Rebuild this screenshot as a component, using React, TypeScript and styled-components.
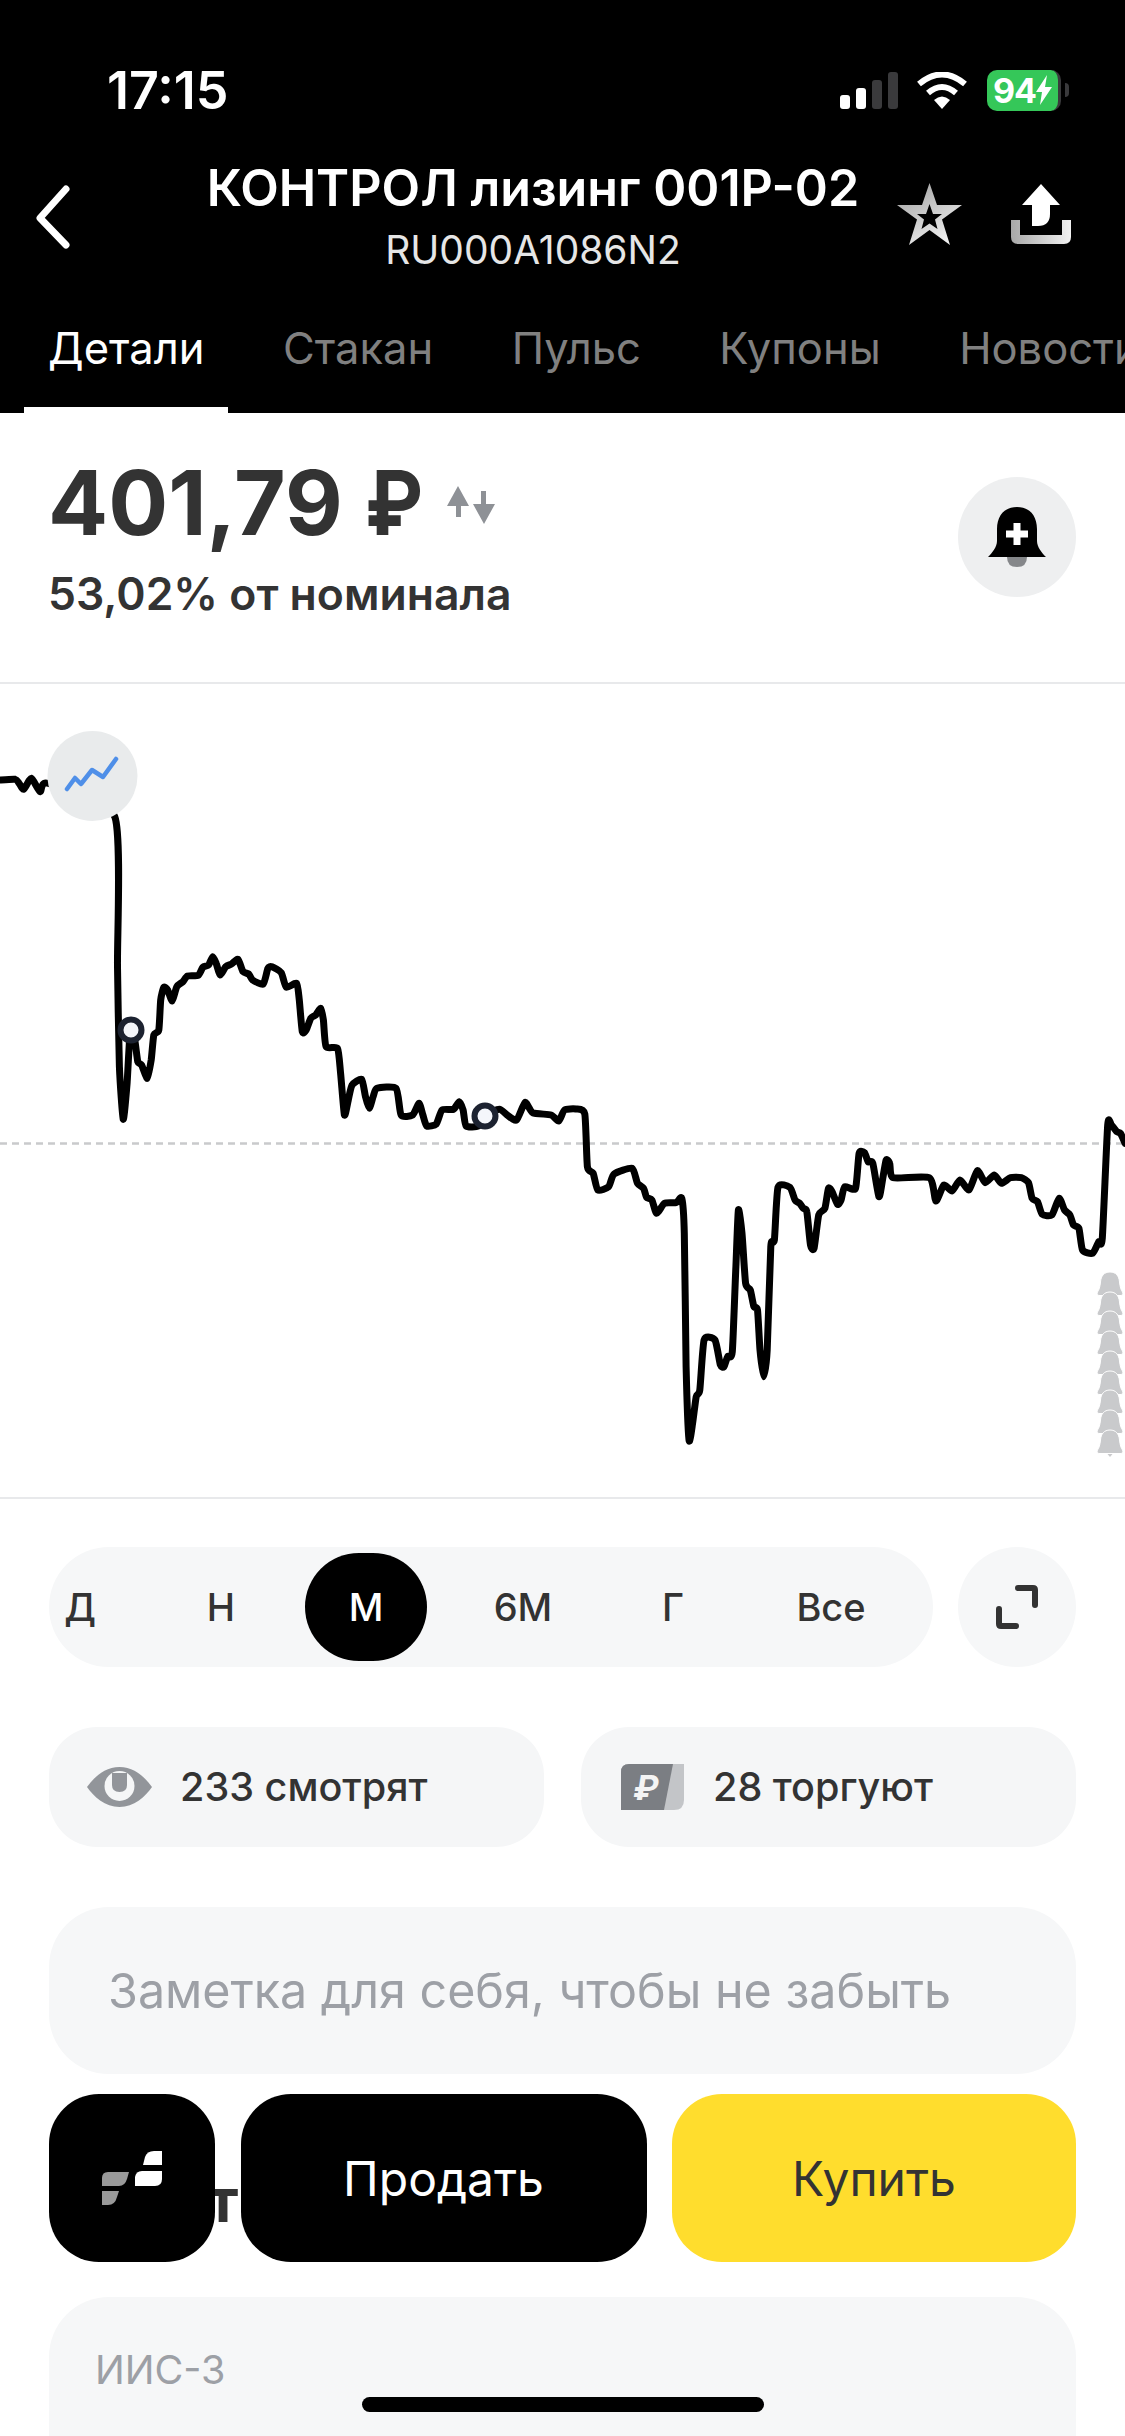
import styled, { createGlobalStyle } from "styled-components";

const GlobalStyle = createGlobalStyle`
  html, body {
    margin: 0;
    padding: 0;
    background: #fff;
    font-family: Inter, "Liberation Sans", sans-serif;
  }
  * {
    box-sizing: border-box;
  }
`;

const Screen = styled.div`
  position: relative;
  width: 1125px;
  height: 2436px;
  overflow: hidden;
  background: #fff;
`;

const Header = styled.header`
  background: #000;
  color: #fff;
  height: 413px;
  display: flex;
  flex-direction: column;
`;

const StatusBar = styled.div`
  height: 130px;
  padding: 50px 0 0 107px;
  display: flex;
  align-items: center;
`;

const Time = styled.span`
  width: 733px;
  font-size: 52px;
  font-weight: 600;
`;

const Battery = styled.div`
  margin-left: 20px;
  width: 74px;
  height: 41px;
  border-radius: 10px;
  background: #35c759;
  border-right: 3px solid #3a3a3c;
  display: flex;
  align-items: center;
  justify-content: center;
  font-size: 34px;
  font-weight: 700;
  letter-spacing: -1px;
`;

const BatteryCap = styled.div`
  width: 4px;
  height: 14px;
  margin-left: 4px;
  border-radius: 0 4px 4px 0;
  background: #3a3a3c;
`;

const NavBar = styled.div`
  height: 170px;
  display: flex;
  align-items: center;
`;

const BackButton = styled.div`
  width: 200px;
  padding: 4px 0 0 30px;
  display: flex;
`;

const TitleBlock = styled.div`
  width: 666px;
  text-align: center;
  white-space: nowrap;
`;

const Title = styled.div`
  font-size: 50.200px;
  font-weight: 600;
  line-height: 60px;
  margin-bottom: 9px;
`;

const Isin = styled.div`
  font-size: 39px;
  line-height: 46px;
  color: #e6e6e6;
`;

const NavActions = styled.div`
  margin-left: 31px;
  margin-top: -2px;
  display: flex;
  align-items: center;
  gap: 49px;
`;

const Tabs = styled.nav`
  height: 113px;
  display: flex;
  padding-left: 24px;
  white-space: nowrap;
  overflow: hidden;
`;

const Tab = styled.div<{ $active?: boolean }>`
  height: 113px;
  padding: 20px 24px 0;
  margin-right: 30.500px;
  font-size: 43.500px;
  line-height: 56px;
  color: ${(p) => (p.$active ? "#fff" : "#808080")};
  border-bottom: 6px solid ${(p) => (p.$active ? "#fff" : "transparent")};
`;

const PriceSection = styled.section`
  height: 271px;
  padding: 44px 49px 0 48px;
  display: flex;
  justify-content: space-between;
  border-bottom: 2px solid #e8e9eb;
`;

const PriceRow = styled.div`
  display: flex;
  align-items: center;
  gap: 15px;
  height: 90px;
  font-size: 89px;
  font-weight: 700;
  color: #333;
`;

const PriceCurrency = styled.span`
  display: inline-block;
  margin-left: 7px;
  transform: scaleX(0.88);
  transform-origin: left center;
`;

const PriceNote = styled.div`
  margin-top: 20px;
  font-size: 44.500px;
  line-height: 54px;
  font-weight: 600;
  color: #333;
`;

const RoundButton = styled.div<{ $bg: string }>`
  width: 118px;
  height: 120px;
  border-radius: 50%;
  background: ${(p) => p.$bg};
  display: flex;
  align-items: center;
  justify-content: center;
  flex-shrink: 0;
`;

const BellButton = styled(RoundButton)`
  margin-top: 20px;
`;

const ChartBox = styled.div`
  height: 815px;
  border-bottom: 2px solid #e8e9eb;
  display: flex;
`;

const Content = styled.div`
  padding: 48px 49px 0;
  display: flex;
  flex-direction: column;
`;

const RangeRow = styled.div`
  display: flex;
  justify-content: space-between;
`;

const RangePill = styled.div`
  width: 884px;
  height: 120px;
  border-radius: 60px;
  background: #f6f7f8;
  display: flex;
  align-items: center;
  overflow: hidden;
`;

const RangeItem = styled.div<{ $active?: boolean; $shift: number }>`
  width: 122px;
  height: 108px;
  margin-left: ${(p) => p.$shift}px;
  flex-shrink: 0;
  border-radius: 54px;
  background: ${(p) => (p.$active ? "#000" : "transparent")};
  color: ${(p) => (p.$active ? "#fff" : "#333")};
  display: flex;
  align-items: center;
  justify-content: center;
  font-size: 38px;
  font-weight: 500;
`;

const StatsRow = styled.div`
  margin-top: 60px;
  display: grid;
  grid-template-columns: 495px 495px;
  justify-content: space-between;
`;

const StatCard = styled.div<{ $gap: number; $left: number }>`
  height: 120px;
  border-radius: 48px;
  background: #f5f6f7;
  padding-left: ${(p) => p.$left}px;
  display: flex;
  align-items: center;
  gap: ${(p) => p.$gap}px;
  font-size: 39.600px;
  font-weight: 500;
  color: #333;
`;

const NoteField = styled.div`
  margin-top: 60px;
  height: 167px;
  border-radius: 60px;
  background: #f6f7f8;
  padding-left: 59px;
  display: flex;
  align-items: center;
  font-size: 48.400px;
  color: #9da0a6;
`;

const SectionHeading = styled.h2`
  margin: 91px 0 0;
  height: 70px;
  font-size: 60px;
  line-height: 70px;
  font-weight: 700;
  letter-spacing: 2.750px;
  color: #333;
`;

const AccountCard = styled.div`
  margin-top: 62px;
  height: 220px;
  border-radius: 60px;
  background: #f6f7f8;
  padding: 50px 46px 0;
  font-size: 39.500px;
  line-height: 46px;
  color: #9da0a6;
`;

const ActionBar = styled.div`
  position: absolute;
  left: 49px;
  top: 2094px;
  width: 1027px;
  height: 168px;
  display: grid;
  grid-template-columns: 166px 406px 404px;
  justify-content: space-between;
`;

const ActionButton = styled.div<{ $yellow?: boolean }>`
  border-radius: 50px;
  background: ${(p) => (p.$yellow ? "#ffdd2d" : "#000")};
  color: ${(p) => (p.$yellow ? "#333" : "#fff")};
  display: flex;
  align-items: center;
  justify-content: center;
  font-size: 48px;
`;

const HomeIndicator = styled.div`
  position: absolute;
  left: 362px;
  top: 2397px;
  width: 402px;
  height: 15px;
  border-radius: 8px;
  background: #000;
`;

// points read off the reference, [x, y] in page pixels
const leftPart = [
  [0, 240], [40, 238], [50, 250], [62, 268], [82, 235], [105, 275], [125, 250], [300, 350],
  [307, 800], [312, 1100], [322, 1258], [332, 1150], [340, 1000], [352, 1020], [360, 1085],
  [370, 1095], [385, 1135], [395, 1080], [402, 1005], [415, 990], [420, 900], [428, 862],
  [438, 870], [450, 903], [462, 860], [478, 845], [490, 828], [518, 826], [530, 802],
  [545, 795], [556, 770], [565, 790], [575, 825], [590, 800], [605, 792], [622, 778],
  [635, 815], [650, 822], [660, 840], [688, 852], [700, 805], [710, 800], [735, 818],
  [748, 862], [775, 850], [782, 900], [790, 995], [800, 990], [812, 955], [825, 945],
  [838, 925], [845, 960], [852, 1040], [882, 1045], [890, 1120], [900, 1245], [910, 1200],
  [920, 1155], [945, 1138], [955, 1190], [965, 1225], [975, 1190], [985, 1165], [1035, 1165],
  [1048, 1245], [1078, 1245], [1095, 1210], [1105, 1245], [1115, 1278], [1140, 1272],
  [1155, 1230], [1185, 1228], [1200, 1205], [1210, 1230], [1218, 1278], [1250, 1278],
  [1268, 1245], [1305, 1228], [1325, 1245], [1350, 1260], [1372, 1207], [1392, 1238],
  [1440, 1245], [1460, 1263], [1475, 1230], [1505, 1227], [1528, 1242], [1535, 1400],
].map(([x, y]) => [x / 2.613, y / 3 + 700]);

const rightPart = [
  [92, 520], [105, 570], [135, 560], [150, 522], [200, 505], [215, 550], [232, 565], [240, 592],
  [255, 600], [268, 640], [290, 610], [322, 608], [338, 595], [345, 700], [350, 1100],
  [358, 1320], [368, 1270], [378, 1190], [388, 1170], [400, 1020], [430, 1020], [445, 1095],
  [455, 1100], [465, 1070], [478, 1055], [488, 800], [495, 630], [505, 700], [515, 850],
  [528, 870], [538, 920], [548, 930], [555, 1050], [565, 1130], [575, 1050], [585, 740],
  [595, 720], [605, 562], [638, 562], [652, 600], [665, 610], [675, 625], [685, 635],
  [695, 735], [705, 745], [718, 645], [735, 625], [745, 565], [755, 575], [770, 613],
  [780, 600], [790, 560], [820, 565], [830, 460], [845, 458], [855, 485], [868, 490],
  [885, 590], [895, 540], [905, 480], [915, 490], [925, 533], [1025, 533], [1043, 603],
  [1065, 555], [1088, 573], [1110, 540], [1135, 570], [1158, 512], [1180, 548], [1205, 525],
  [1225, 550], [1250, 533], [1280, 533], [1300, 548], [1310, 595], [1325, 605], [1338, 643],
  [1365, 645], [1385, 595], [1400, 630], [1415, 645], [1425, 675], [1440, 685], [1450, 750],
  [1478, 760], [1495, 725], [1505, 715], [1520, 375], [1530, 375], [1545, 395], [1555, 400],
  [1568, 430],
].map(([x, y]) => [x / 2.775 + 560, y / 3 + 1000]);

const linePoints = [...leftPart, ...rightPart];

const smoothPath = (pts: number[][]) => {
  let d = `M${pts[0][0].toFixed(1)} ${pts[0][1].toFixed(1)}`;
  for (let i = 0; i < pts.length - 1; i++) {
    const p0 = pts[Math.max(i - 1, 0)];
    const p1 = pts[i];
    const p2 = pts[i + 1];
    const p3 = pts[Math.min(i + 2, pts.length - 1)];
    const c1x = p1[0] + (p2[0] - p0[0]) / 10;
    const c1y = p1[1] + (p2[1] - p0[1]) / 10;
    const c2x = p2[0] - (p3[0] - p1[0]) / 10;
    const c2y = p2[1] - (p3[1] - p1[1]) / 10;
    d += `C${c1x.toFixed(1)} ${c1y.toFixed(1)} ${c2x.toFixed(1)} ${c2y.toFixed(1)} ${p2[0].toFixed(1)} ${p2[1].toFixed(1)}`;
  }
  return d;
};

const bellTops = [1272, 1292, 1311, 1331, 1351, 1371, 1390, 1410, 1430];

function PriceChart() {
  return (
    <svg width="1125" height="813" viewBox="0 684 1125 813">
      <line x1="0" y1="1143.5" x2="1125" y2="1143.5" stroke="#c9cacc" strokeWidth="2.5" strokeDasharray="7 5" />
      <path d={smoothPath(linePoints)} fill="none" stroke="#000" strokeWidth="7" strokeLinejoin="round" strokeLinecap="round" />
      <circle cx="92.5" cy="776" r="45" fill="#e9ebec" />
      <polyline
        points="67,789 75,778 81,784 92,770 103,777 116,759"
        fill="none"
        stroke="#4f8fe8"
        strokeWidth="4.500"
        strokeLinecap="round"
        strokeLinejoin="round"
      />
      <circle cx="131" cy="1030" r="10.5" fill="#f4f6fb" stroke="#1c2230" strokeWidth="6" />
      <circle cx="485" cy="1116" r="10.5" fill="#f4f6fb" stroke="#1c2230" strokeWidth="6" />
      {bellTops.map((top) => (
        <path
          key={top}
          transform={`translate(1110 ${top})`}
          d="M0 0c-6 0-9 4-9.500 10c-.5 5-1.500 8-3 10c-1 1.500 0 3.500 1.500 3.500h22c1.500 0 2.500-2 1.500-3.500c-1.500-2-2.500-5-3-10c-.5-6-3.500-10-9.500-10z"
          fill="#c9cacc"
          stroke="#fff"
          strokeWidth="1"
        />
      ))}
      <path d="M1107.500 1454h5l-2.500 3z" fill="#c9cacc" />
    </svg>
  );
}

function App() {
  return (
    <Screen>
      <GlobalStyle />
      <Header>
        <StatusBar>
          <Time>17:15</Time>
          <svg width="58" height="37" viewBox="0 0 58 37">
            <rect x="0" y="23" width="10" height="14" rx="3" fill="#fff" />
            <rect x="16" y="16" width="10" height="21" rx="3" fill="#fff" />
            <rect x="32" y="8" width="10" height="29" rx="3" fill="#3a3a3c" />
            <rect x="48" y="0" width="10" height="37" rx="3" fill="#3a3a3c" />
          </svg>
          <svg width="50" height="37" viewBox="0 0 50 37" style={{ marginLeft: 19 }}>
            <path d="M2 12Q25-7 48 12" fill="none" stroke="#fff" strokeWidth="6" />
            <path d="M11 21Q25 9 39 21" fill="none" stroke="#fff" strokeWidth="6" />
            <path d="M17 28Q25 21 33 28L25 37z" fill="#fff" />
          </svg>
          <Battery>
            94
            <svg width="16" height="30" viewBox="0 0 16 30">
              <path d="M11 0L0 17h6l-2 13L16 12H9z" fill="#fff" />
            </svg>
          </Battery>
          <BatteryCap />
        </StatusBar>
        <NavBar>
          <BackButton>
            <svg width="44" height="64" viewBox="0 0 44 64">
              <polyline points="36,4 10,33 36,60" fill="none" stroke="#fff" strokeWidth="7" strokeLinecap="round" strokeLinejoin="round" />
            </svg>
          </BackButton>
          <TitleBlock>
            <Title>КОНТРОЛ лизинг 001Р-02</Title>
            <Isin>RU000A1086N2</Isin>
          </TitleBlock>
          <NavActions>
            <svg width="65" height="62" viewBox="0 0 65 62">
              <defs>
                <linearGradient id="starFill" x1="0" y1="0" x2="0.6" y2="1">
                  <stop offset="0" stopColor="#9d9d9d" />
                  <stop offset="1" stopColor="#eeeeee" />
                </linearGradient>
              </defs>
              <path
                fillRule="evenodd"
                fill="url(#starFill)"
                d="M32.500 0L40 22H65L45 36.500L53 62L32.500 47L12 62L20 36.500L0 22H25zM32.500 21L29 31H20L27 36.500L24.500 46L32.500 40.500L40.500 46L38 36.500L45 31H36z"
              />
            </svg>
            <svg width="60" height="60" viewBox="0 0 60 60">
              <defs>
                <linearGradient id="trayFill" x1="0" y1="0" x2="1" y2="0">
                  <stop offset="0" stopColor="#a8a8a8" />
                  <stop offset="1" stopColor="#f2f2f2" />
                </linearGradient>
              </defs>
              <path d="M30 0L49 21H39V30Q39 42 27 42H21V21H11z" fill="#fff" />
              <path d="M0 36H9V51H51V36H60V53Q60 60 53 60H7Q0 60 0 53z" fill="url(#trayFill)" />
            </svg>
          </NavActions>
        </NavBar>
        <Tabs>
          <Tab $active>Детали</Tab>
          <Tab>Стакан</Tab>
          <Tab>Пульс</Tab>
          <Tab>Купоны</Tab>
          <Tab>Новости</Tab>
        </Tabs>
      </Header>

      <PriceSection>
        <div>
          <PriceRow>
            <span>401,79</span>
            <PriceCurrency>₽</PriceCurrency>
            <svg width="50" height="38" viewBox="0 0 50 38" style={{ marginTop: 6 }}>
              <path d="M12 0L23 20H15V31H10V20H1z" fill="#8e9196" />
              <path d="M38 38L27 18H35V5H40V18H49z" fill="#8e9196" />
            </svg>
          </PriceRow>
          <PriceNote>53,02% от номинала</PriceNote>
        </div>
        <BellButton $bg="#eeeff0">
          <svg width="58" height="60" viewBox="0 0 58 60">
            <path d="M19 48H39V50Q39 60 29 60T19 50z" fill="#85878a" />
            <path d="M29 0C17 0 9 8 9 22V34C9 40 4 46 0 50H58C54 46 49 40 49 34V22C49 8 41 0 29 0z" fill="#000" />
            <path d="M25.500 16H32.500V23.500H40V30.500H32.500V38H25.500V30.500H18V23.500H25.500z" fill="#fff" />
          </svg>
        </BellButton>
      </PriceSection>

      <ChartBox>
        <PriceChart />
      </ChartBox>

      <Content>
        <RangeRow>
          <RangePill>
            <RangeItem $shift={-30}>Д</RangeItem>
            <RangeItem $shift={19}>Н</RangeItem>
            <RangeItem $shift={23} $active>М</RangeItem>
            <RangeItem $shift={35}>6М</RangeItem>
            <RangeItem $shift={28}>Г</RangeItem>
            <RangeItem $shift={36}>Все</RangeItem>
          </RangePill>
          <RoundButton $bg="#f6f7f8">
            <svg width="42" height="44" viewBox="0 0 42 44">
              <path d="M22 3H37Q39 3 39 5V20" fill="none" stroke="#333" strokeWidth="6" strokeLinecap="round" />
              <path d="M3 24V39Q3 41 5 41H20" fill="none" stroke="#333" strokeWidth="6" strokeLinecap="round" />
            </svg>
          </RoundButton>
        </RangeRow>

        <StatsRow>
          <StatCard $left={38} $gap={28}>
            <svg width="65" height="40" viewBox="0 0 65 40">
              <path d="M32.500 0C47 0 58 10 65 20C58 30 47 40 32.500 40C18 40 7 30 0 20C7 10 18 0 32.500 0z" fill="#92959a" />
              <circle cx="32.500" cy="19" r="15" fill="#f5f6f7" />
              <path d="M25 6H40V18Q40 25 32.500 25T25 18z" fill="#92959a" />
            </svg>
            233 смотрят
          </StatCard>
          <StatCard $left={40} $gap={29}>
            <svg width="63" height="46" viewBox="0 0 63 46">
              <path d="M8 0H63V36Q63 46 53 46H0V8Q0 0 8 0z" fill="#c3c5c8" />
              <path d="M8 0H52L43 46H0V8Q0 0 8 0z" fill="#7b7e83" />
              <text x="25" y="36" fontSize="34" fontWeight="700" fontStyle="italic" fill="#f4f4f4" textAnchor="middle" fontFamily="Inter, sans-serif">₽</text>
            </svg>
            28 торгуют
          </StatCard>
        </StatsRow>

        <NoteField>Заметка для себя, чтобы не забыть</NoteField>

        <SectionHeading>Отчёт</SectionHeading>
        <AccountCard>ИИС-3</AccountCard>
      </Content>

      <ActionBar>
        <ActionButton>
          <svg width="60" height="54" viewBox="0 0 60 54">
            <path d="M0 27Q0 21 6 21H27L25 28Q23 35 17 35H0z" fill="#999" />
            <path d="M0 40H17L15 46Q13 54 6 54H0z" fill="#999" />
            <path d="M33 26Q34 20 40 20H60V28Q60 35 53 35H33z" fill="#fff" />
            <path d="M41 14L43 6Q45 0 52 0H60V14z" fill="#fff" />
          </svg>
        </ActionButton>
        <ActionButton>Продать</ActionButton>
        <ActionButton $yellow>Купить</ActionButton>
      </ActionBar>
      <HomeIndicator />
    </Screen>
  );
}

export default App;
